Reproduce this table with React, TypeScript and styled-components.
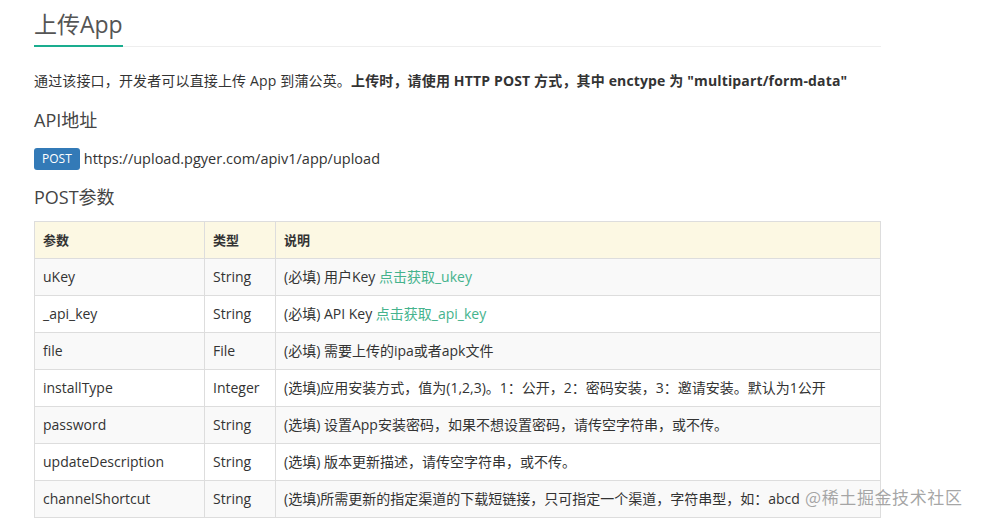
import React from "react";
import styled, { createGlobalStyle } from "styled-components";

const Global = createGlobalStyle`
  html, body { margin: 0; padding: 0; background: #fff; }
  body {
    font-family: "Open Sans", "Noto Sans CJK SC", sans-serif;
    color: #333;
    font-size: 14px;
    line-height: 1.42857;
  }
`;

const Page = styled.div`
  position: relative;
  width: 981px;
  height: 524px;
  overflow: hidden;
  padding: 0 0 0 34px;
  box-sizing: border-box;
`;

const Content = styled.div`
  width: 847px;
`;

const TitleBar = styled.div`
  padding-top: 9px;
  border-bottom: 1px solid #eee;
  display: flex;
`;

const Title = styled.h2`
  margin: 0 0 -1px 0;
  font-size: 23px;
  font-weight: 400;
  line-height: 30px;
  color: #555;
  padding-bottom: 6px;
  border-bottom: 2px solid #1aad8f;
`;

const Intro = styled.p`
  margin: 24px 0 0 0;
  font-size: 14px;
  line-height: 20px;
  letter-spacing: 0.15px;
  color: #333;
  b { font-weight: 700; }
`;

const SubTitle = styled.h3<{ $top: number }>`
  margin: ${(p) => p.$top}px 0 0 0;
  font-size: 18px;
  font-weight: 400;
  line-height: 26px;
  color: #444;
`;

const UrlLine = styled.div`
  margin-top: 15px;
  display: flex;
  align-items: center;
  gap: 4px;
  font-size: 14.5px;
  line-height: 22px;
  color: #333;
`;

const Badge = styled.span`
  display: inline-block;
  background: #337ab7;
  color: #fff;
  font-size: 12px;
  line-height: 22px;
  height: 22px;
  padding: 0 8px;
  border-radius: 3px;
  font-weight: 400;
`;

const Table = styled.table`
  margin-top: 11px;
  width: 847px;
  border-collapse: collapse;
  border: 1px solid #ddd;
  table-layout: fixed;
`;

const Th = styled.th`
  background: #fcf8e3;
  border: 1px solid #ddd;
  text-align: left;
  font-size: 13px;
  font-weight: 700;
  padding: 8px;
  line-height: 20px;
  color: #333;
`;

const Row = styled.tr<{ $striped: boolean }>`
  background: ${(p) => (p.$striped ? "#f9f9f9" : "#fff")};
`;

const Td = styled.td`
  border: 1px solid #ddd;
  padding: 8px;
  font-size: 14px;
  line-height: 20px;
  color: #333;
  white-space: nowrap;
  overflow: visible;
`;

const Desc = styled.span`
  font-size: 14px;
`;

const Link = styled.a`
  color: #45b38d;
  text-decoration: none;
`;

const Watermark = styled.div`
  position: absolute;
  left: 805px;
  top: 485px;
  font-family: "Noto Sans CJK SC", sans-serif;
  font-size: 17px;
  line-height: 24px;
  color: rgba(150, 150, 150, 0.85);
  letter-spacing: 0.6px;
`;

type Param = { name: string; type: string; desc: React.ReactNode };

const params: Param[] = [
  { name: "uKey", type: "String", desc: <>(必填) 用户Key <Link>点击获取_ukey</Link></> },
  { name: "_api_key", type: "String", desc: <>(必填) API Key <Link>点击获取_api_key</Link></> },
  { name: "file", type: "File", desc: <>(必填) 需要上传的ipa或者apk文件</> },
  { name: "installType", type: "Integer", desc: <>(选填)应用安装方式，值为(1,2,3)。1：公开，2：密码安装，3：邀请安装。默认为1公开</> },
  { name: "password", type: "String", desc: <>(选填) 设置App安装密码，如果不想设置密码，请传空字符串，或不传。</> },
  { name: "updateDescription", type: "String", desc: <>(选填) 版本更新描述，请传空字符串，或不传。</> },
  { name: "channelShortcut", type: "String", desc: <>(选填)所需更新的指定渠道的下载短链接，只可指定一个渠道，字符串型，如：abcd</> },
];

export default function App() {
  return (
    <Page>
      <Global />
      <Content>
        <TitleBar>
          <Title>上传App</Title>
        </TitleBar>
        <Intro>
          通过该接口，开发者可以直接上传 App 到蒲公英。<b>上传时，请使用 HTTP POST 方式，其中 enctype 为 "multipart/form-data"</b>
        </Intro>
        <SubTitle $top={16}>API地址</SubTitle>
        <UrlLine>
          <Badge>POST</Badge>
          https://upload.pgyer.com/apiv1/app/upload
        </UrlLine>
        <SubTitle $top={14}>POST参数</SubTitle>
        <Table>
          <colgroup>
            <col style={{ width: 170 }} />
            <col style={{ width: 71 }} />
            <col />
          </colgroup>
          <thead>
            <tr>
              <Th>参数</Th>
              <Th>类型</Th>
              <Th>说明</Th>
            </tr>
          </thead>
          <tbody>
            {params.map((p, i) => (
              <Row key={p.name} $striped={i % 2 === 0}>
                <Td>{p.name}</Td>
                <Td>{p.type}</Td>
                <Td><Desc>{p.desc}</Desc></Td>
              </Row>
            ))}
          </tbody>
        </Table>
      </Content>
      <Watermark>@稀土掘金技术社区</Watermark>
    </Page>
  );
}
